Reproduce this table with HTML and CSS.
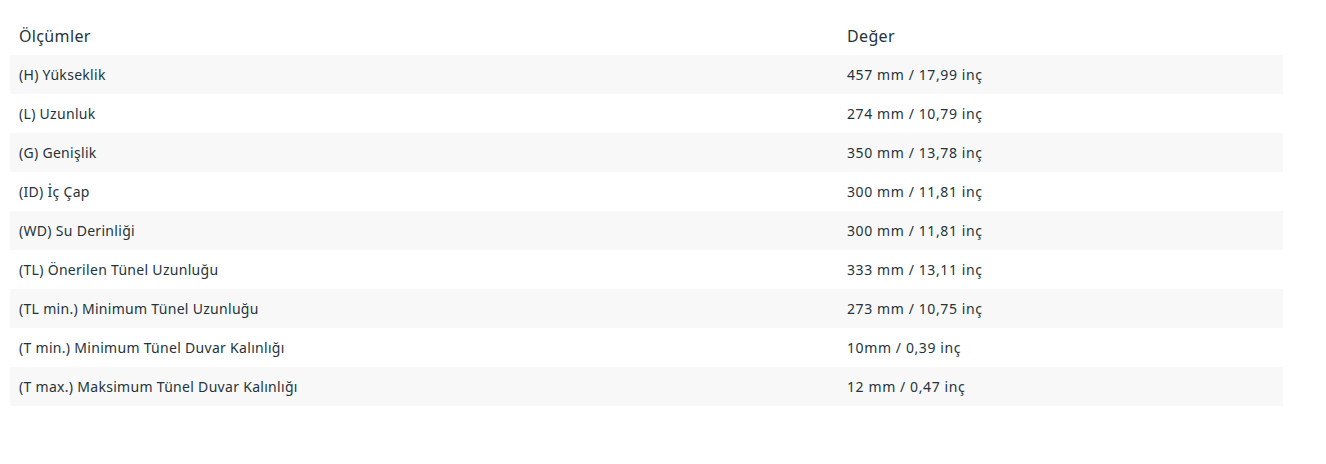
FILE: index.html
```html
<!DOCTYPE html>
<html lang="tr">
<head>
<meta charset="utf-8">
<link rel="stylesheet" href="styles.css">
</head>
<body>
<table class="spec">
  <thead>
    <tr><th class="c1">Ölçümler</th><th>Değer</th></tr>
  </thead>
  <tbody>
    <tr><td>(H) Yükseklik</td><td class="v">457 mm / 17,99 inç</td></tr>
    <tr><td>(L) Uzunluk</td><td class="v">274 mm / 10,79 inç</td></tr>
    <tr><td>(G) Genişlik</td><td class="v">350 mm / 13,78 inç</td></tr>
    <tr><td>(ID) İç Çap</td><td class="v">300 mm / 11,81 inç</td></tr>
    <tr><td>(WD) Su Derinliği</td><td class="v">300 mm / 11,81 inç</td></tr>
    <tr><td>(TL) Önerilen Tünel Uzunluğu</td><td class="v">333 mm / 13,11 inç</td></tr>
    <tr><td>(TL min.) Minimum Tünel Uzunluğu</td><td class="v">273 mm / 10,75 inç</td></tr>
    <tr><td>(T min.) Minimum Tünel Duvar Kalınlığı</td><td class="v">10mm / 0,39 inç</td></tr>
    <tr><td>(T max.) Maksimum Tünel Duvar Kalınlığı</td><td class="v">12 mm / 0,47 inç</td></tr>
  </tbody>
</table>
</body>
</html>
```
FILE: styles.css
```css
html, body {
  margin: 0;
  background: #fff;
}
body {
  padding: 16px 0 0 10px;
  font-family: "Noto Sans", "Open Sans", sans-serif;
  color: #24343b;
}
.spec {
  width: 1273px;
  border-collapse: collapse;
  table-layout: fixed;
}
.spec th,
.spec td {
  box-sizing: border-box;
  height: 39px;
  padding: 0 9px;
  vertical-align: middle;
  text-align: left;
}
.spec .c1 {
  width: 828px;
}
.spec th {
  font-weight: 400;
  font-size: 16px;
  letter-spacing: 0.35px;
}
.spec td {
  font-size: 14px;
  letter-spacing: 0.3px;
}
.spec td.v {
  letter-spacing: 0.6px;
}
.spec tbody tr:nth-child(odd) {
  background: #f8f8f8;
}
```
